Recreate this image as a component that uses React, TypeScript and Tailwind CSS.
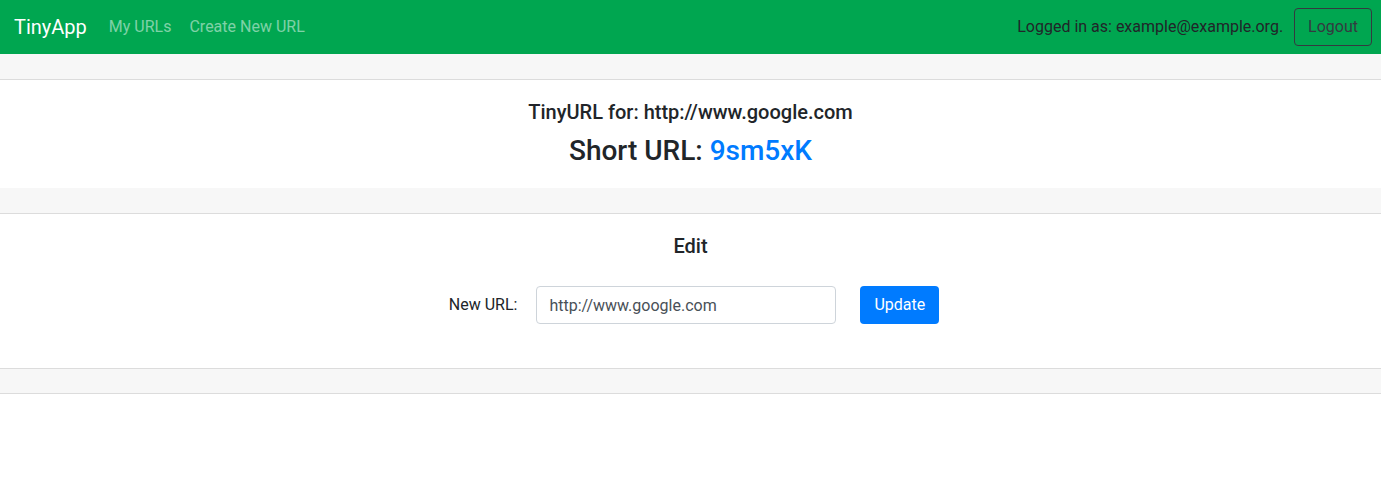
export default function App() {
  return (
    <div className="min-h-screen bg-white text-[#212529] font-['Roboto','Liberation_Sans',sans-serif]">
      <nav className="flex h-[54px] items-center justify-between bg-[#00a650] pl-[14px] pr-[9px]">
        <div className="flex items-center">
          <a href="#" className="mr-[22px] text-[20px] text-white">TinyApp</a>
          <a href="#" className="mr-[18px] text-[16px] text-white/50">My URLs</a>
          <a href="#" className="text-[16px] text-white/50">Create New URL</a>
        </div>
        <div className="flex items-center">
          <span className="mr-[11px] text-[16px] text-[#212529]">Logged in as: example@example.org.</span>
          <button className="h-[38px] rounded-[4px] border border-[#343a40] px-[13px] text-[16px] text-[#343a40]">
            Logout
          </button>
        </div>
      </nav>

      <div className="h-[26px] border-b border-[#dcdcdc] bg-[#f7f7f7]" />
      <div className="flex flex-col items-center px-5 pt-5 pb-5">
        <h5 className="text-[20px] leading-[24px] font-medium">TinyURL for: http://www.google.com</h5>
        <h3 className="mt-[10px] text-[28px] leading-[34px] font-medium">
          Short URL: <a href="#" className="text-[#007bff]">9sm5xK</a>
        </h3>
      </div>

      <div className="h-[26px] border-b border-[#dcdcdc] bg-[#f7f7f7]" />
      <div className="flex flex-col items-center px-5 pt-5 pb-[44px]">
        <h5 className="text-[20px] leading-[24px] font-medium">Edit</h5>
        <form className="mt-[28px] flex items-center pl-[7px]" onSubmit={e => e.preventDefault()}>
          <label htmlFor="longURL" className="mr-[19px] text-[16px]">New URL:</label>
          <input
            id="longURL"
            name="longURL"
            type="text"
            defaultValue="http://www.google.com"
            className="h-[38px] w-[300px] rounded-[4px] border border-[#ced4da] px-[12px] text-[16px] text-[#495057] focus:outline-none"
          />
          <button type="submit" className="ml-6 h-[38px] rounded-[4px] bg-[#007bff] px-[14px] text-[16px] text-white">
            Update
          </button>
        </form>
      </div>

      <div className="h-[26px] border-y border-[#dcdcdc] bg-[#f7f7f7]" />
    </div>
  )
}
